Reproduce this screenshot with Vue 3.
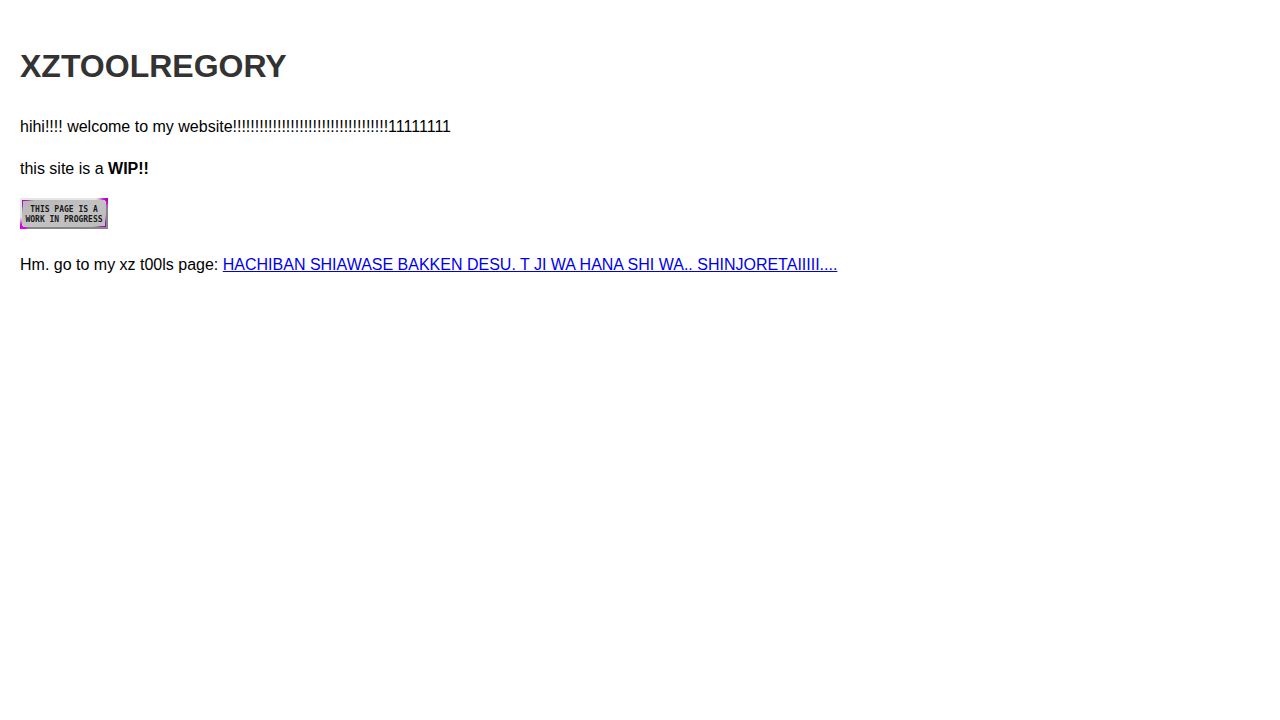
<script setup>
const badgeLines = [
  { text: 'THIS PAGE IS A', y: 14 },
  { text: 'WORK IN PROGRESS', y: 24 },
]
const bangs = '!'.repeat(35)
</script>

<template>
  <main class="page">
    <h1>XZTOOLREGORY</h1>
    <p>hihi!!!! welcome to my website{{ bangs }}11111111</p>
    <p>this site is a <b>WIP!!</b></p>
    <div class="badge">
      <svg width="88" height="31" viewBox="0 0 88 31" role="img" aria-label="This page is a work in progress">
        <defs>
          <linearGradient id="face" x1="0" y1="0" x2="1" y2="1">
            <stop offset="0" stop-color="#b6b6b6" />
            <stop offset="0.5" stop-color="#c2c2c2" />
            <stop offset="1" stop-color="#bcbcbc" />
          </linearGradient>
          <radialGradient id="glow-tr" gradientUnits="userSpaceOnUse" cx="87" cy="1" r="11">
            <stop offset="0" stop-color="#a800b8" />
            <stop offset="0.3" stop-color="#c010d0" />
            <stop offset="1" stop-color="#d060d8" stop-opacity="0" />
          </radialGradient>
          <radialGradient id="glow-bl" gradientUnits="userSpaceOnUse" cx="1" cy="30" r="11">
            <stop offset="0" stop-color="#e000f0" />
            <stop offset="0.3" stop-color="#cc00dc" />
            <stop offset="1" stop-color="#d060d8" stop-opacity="0" />
          </radialGradient>
          <radialGradient id="line-tl" gradientUnits="userSpaceOnUse" cx="2" cy="2" r="13">
            <stop offset="0" stop-color="#a800b8" />
            <stop offset="0.4" stop-color="#b020c0" />
            <stop offset="1" stop-color="#b060b8" stop-opacity="0" />
          </radialGradient>
          <radialGradient id="line-br" gradientUnits="userSpaceOnUse" cx="86" cy="29" r="13">
            <stop offset="0" stop-color="#a800b8" />
            <stop offset="0.4" stop-color="#b020c0" />
            <stop offset="1" stop-color="#b060b8" stop-opacity="0" />
          </radialGradient>
        </defs>
        <path d="M0 0H88L86 2H2V29L0 31Z" fill="#e6e6e6" />
        <path d="M88 0V31H0L2 29H86V2Z" fill="#868686" />
        <rect x="2" y="2" width="84" height="27" fill="url(#face)" />
        <path d="M76 0H88V12H86V3H85V2H76Z" fill="url(#glow-tr)" />
        <path d="M0 19H2V28H3V29H12V31H0Z" fill="url(#glow-bl)" />
        <path d="M2 2H15V3H3V15H2Z" fill="url(#line-tl)" />
        <path d="M86 29H73V28H85V16H86Z" fill="url(#line-br)" />
        <text v-for="line in badgeLines" :key="line.text" x="44" :y="line.y" text-anchor="middle">{{ line.text }}</text>
      </svg>
    </div>
    <p>
      Hm. go to my xz t00ls page:
      <a href="#">HACHIBAN SHIAWASE BAKKEN DESU. T JI WA HANA SHI WA.. SHINJORETAIIIII....</a>
    </p>
  </main>
</template>

<style scoped>
.page {
  display: flow-root;
  padding: 20px;
  font: 16px/26px "Liberation Sans", Arial, sans-serif;
  color: #000;
}
h1 {
  margin: 20px 0 22px;
  font-size: 32px;
  line-height: 52px;
  color: #333;
}
p {
  margin: 0 0 16px;
}
a {
  color: #0000ee;
}
.badge {
  margin: 0 0 23px;
}
.badge svg {
  display: block;
}
.badge text {
  font: bold 8px "DejaVu Sans Mono", monospace;
  fill: #1a1a1a;
}
</style>
